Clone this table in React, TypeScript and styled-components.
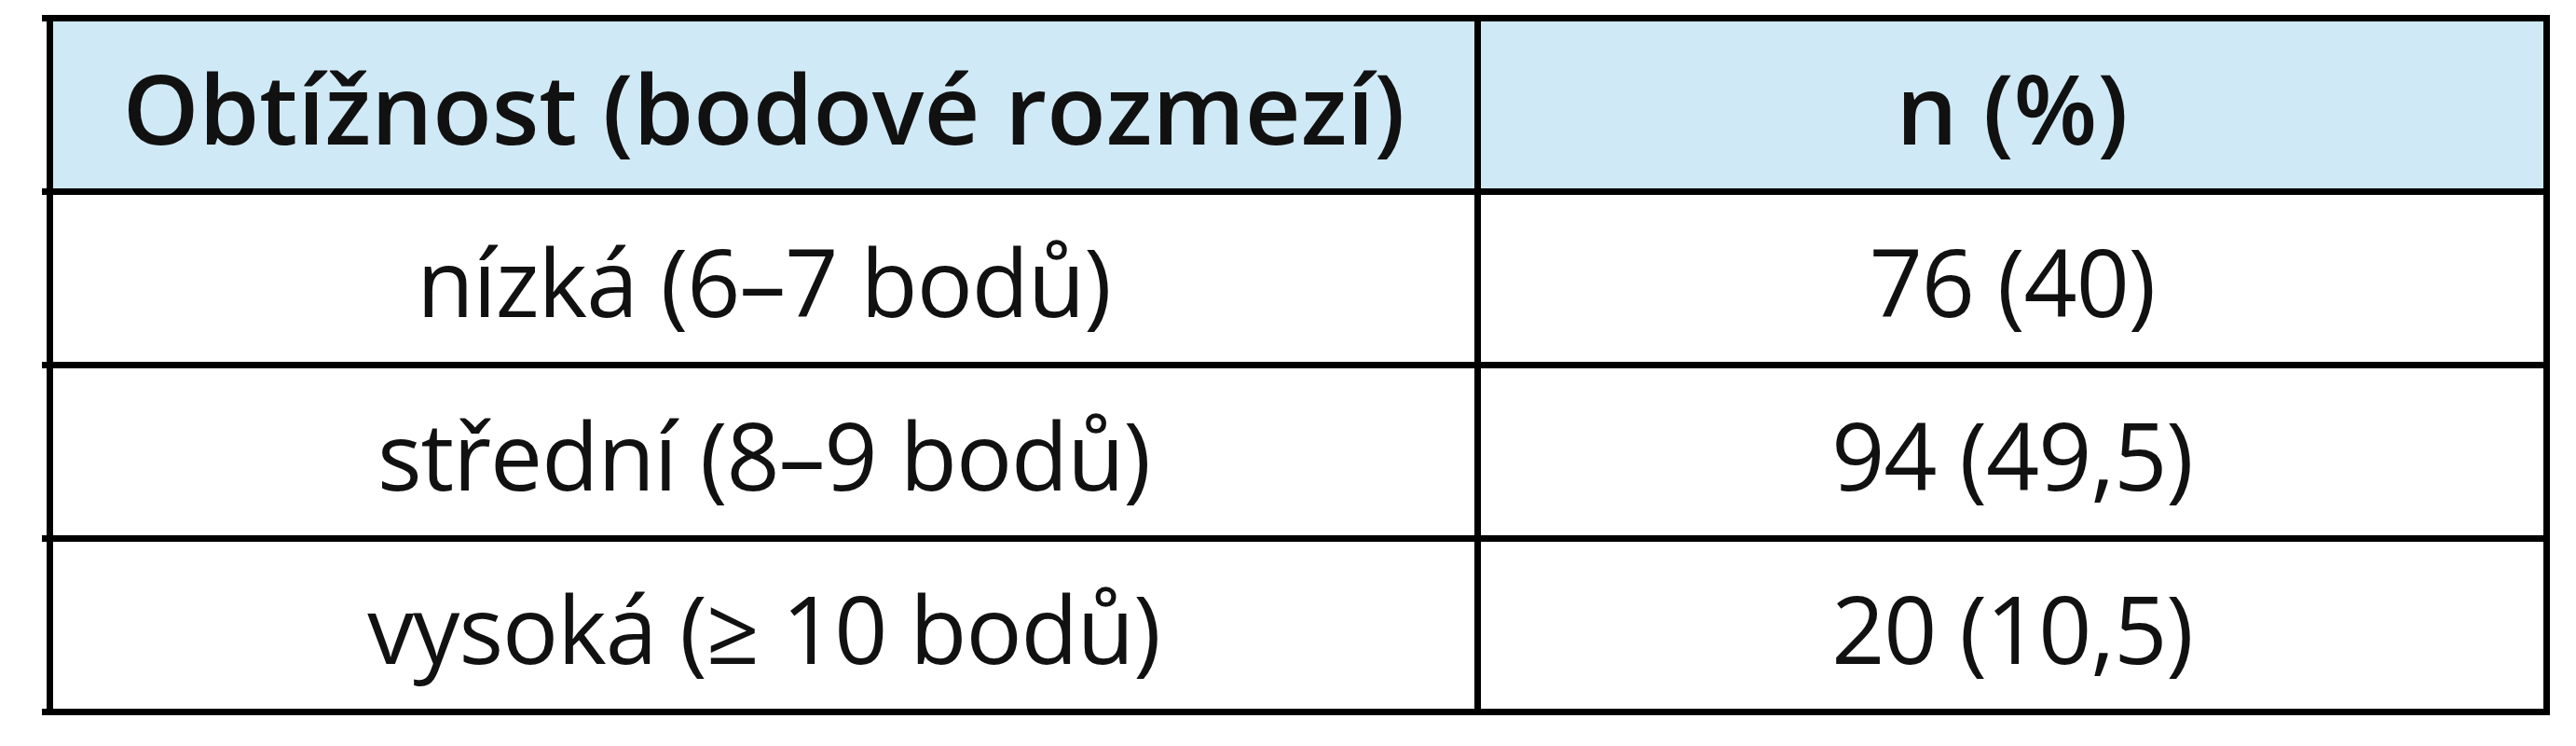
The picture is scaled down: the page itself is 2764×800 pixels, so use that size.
import React from "react";
import styled, { createGlobalStyle } from "styled-components";

const Global = createGlobalStyle`
  html, body { margin: 0; padding: 0; background: #ffffff; }
  body { font-family: "Open Sans", "Liberation Sans", sans-serif; }
`;

const Page = styled.div`
  width: 2764px;
  height: 800px;
  padding: 16px 0 0 45px;
  box-sizing: border-box;
  background: #ffffff;
`;

const Table = styled.div`
  width: 2691px;
  display: flex;
  flex-direction: column;
  border-bottom: 7px solid #000;
`;

const Row = styled.div`
  display: grid;
  grid-template-columns: 1532px 1154px;
  padding-left: 5px;
  border-top: 7px solid #000;
  height: 179px;
`;

const Cell = styled.div<{ $head?: boolean; $last?: boolean }>`
  display: flex;
  align-items: center;
  justify-content: center;
  border-left: 7px solid #000;
  ${(p) => (p.$last ? "border-right: 7px solid #000;" : "")}
  background: ${(p) => (p.$head ? "#d0e9f6" : "#ffffff")};
  font-family: "Open Sans", "Liberation Sans", sans-serif;
  font-size: ${(p) => (p.$head ? "104px" : "100px")};
  font-weight: ${(p) => (p.$head ? 600 : 400)};
  letter-spacing: ${(p) => (p.$head ? "0px" : "-1px")};
  color: #111;
  line-height: 1;
  white-space: nowrap;
  padding-top: 4px;
  box-sizing: border-box;
`;

const rows: [string, string][] = [
  ["nízká (6–7 bodů)", "76 (40)"],
  ["střední (8–9 bodů)", "94 (49,5)"],
  ["vysoká (≥ 10 bodů)", "20 (10,5)"],
];

export default function App() {
  return (
    <>
      <Global />
      <Page>
        <Table>
          <Row>
            <Cell $head>Obtížnost (bodové rozmezí)</Cell>
            <Cell $head $last>n (%)</Cell>
          </Row>
          {rows.map(([a, b]) => (
            <Row key={a}>
              <Cell>{a}</Cell>
              <Cell $last>{b}</Cell>
            </Row>
          ))}
        </Table>
      </Page>
    </>
  );
}
